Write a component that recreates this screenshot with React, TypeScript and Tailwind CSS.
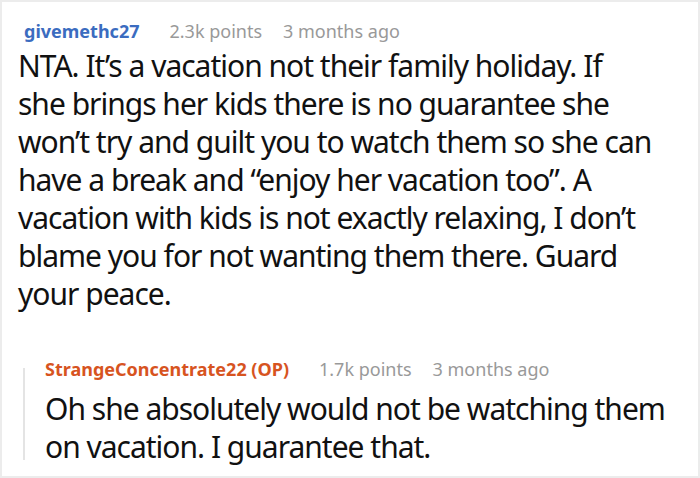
export default function App() {
  return (
    <div className="w-[700px] h-[478px] bg-white border-2 border-[#ececec] overflow-hidden font-['Noto_Sans',sans-serif]">
      <div className="pl-[16px] pt-[15px]">
        {/* Top comment */}
        <div className="flex items-baseline pl-[6px] text-[18px] leading-[28px]">
          <span className="font-bold text-[#3b6cc0]">givemethc27</span>
          <span className="ml-[30px] text-[#999999]">2.3k points</span>
          <span className="ml-[21px] text-[#999999]">3 months ago</span>
        </div>
        <p className="text-[30px] tracking-[-1px] leading-[38px] text-[#111111] mt-[2px] whitespace-nowrap">
          NTA. It’s a vacation not their family holiday. If
          <br />
          she brings her kids there is no guarantee she
          <br />
          won’t try and guilt you to watch them so she can
          <br />
          have a break and “enjoy her vacation too”. A
          <br />
          vacation with kids is not exactly relaxing, I don’t
          <br />
          blame you for not wanting them there. Guard
          <br />
          your peace.
        </p>

        {/* Reply */}
        <div className="mt-[45px] ml-[5px] flex">
          <div className="w-[2px] bg-[#e4e4e4] mt-[10px] mb-[6px]" />
          <div className="pl-[20px]">
            <div className="flex items-baseline text-[18px] leading-[22px]">
              <span className="font-bold text-[#d7541f]">StrangeConcentrate22 (OP)</span>
              <span className="ml-[30px] text-[#999999]">1.7k points</span>
              <span className="ml-[21px] text-[#999999]">3 months ago</span>
            </div>
            <p className="text-[30px] tracking-[-1px] leading-[38px] text-[#111111] mt-[10px] whitespace-nowrap">
              Oh she absolutely would not be watching them
              <br />
              on vacation. I guarantee that.
            </p>
          </div>
        </div>
      </div>
    </div>
  );
}
